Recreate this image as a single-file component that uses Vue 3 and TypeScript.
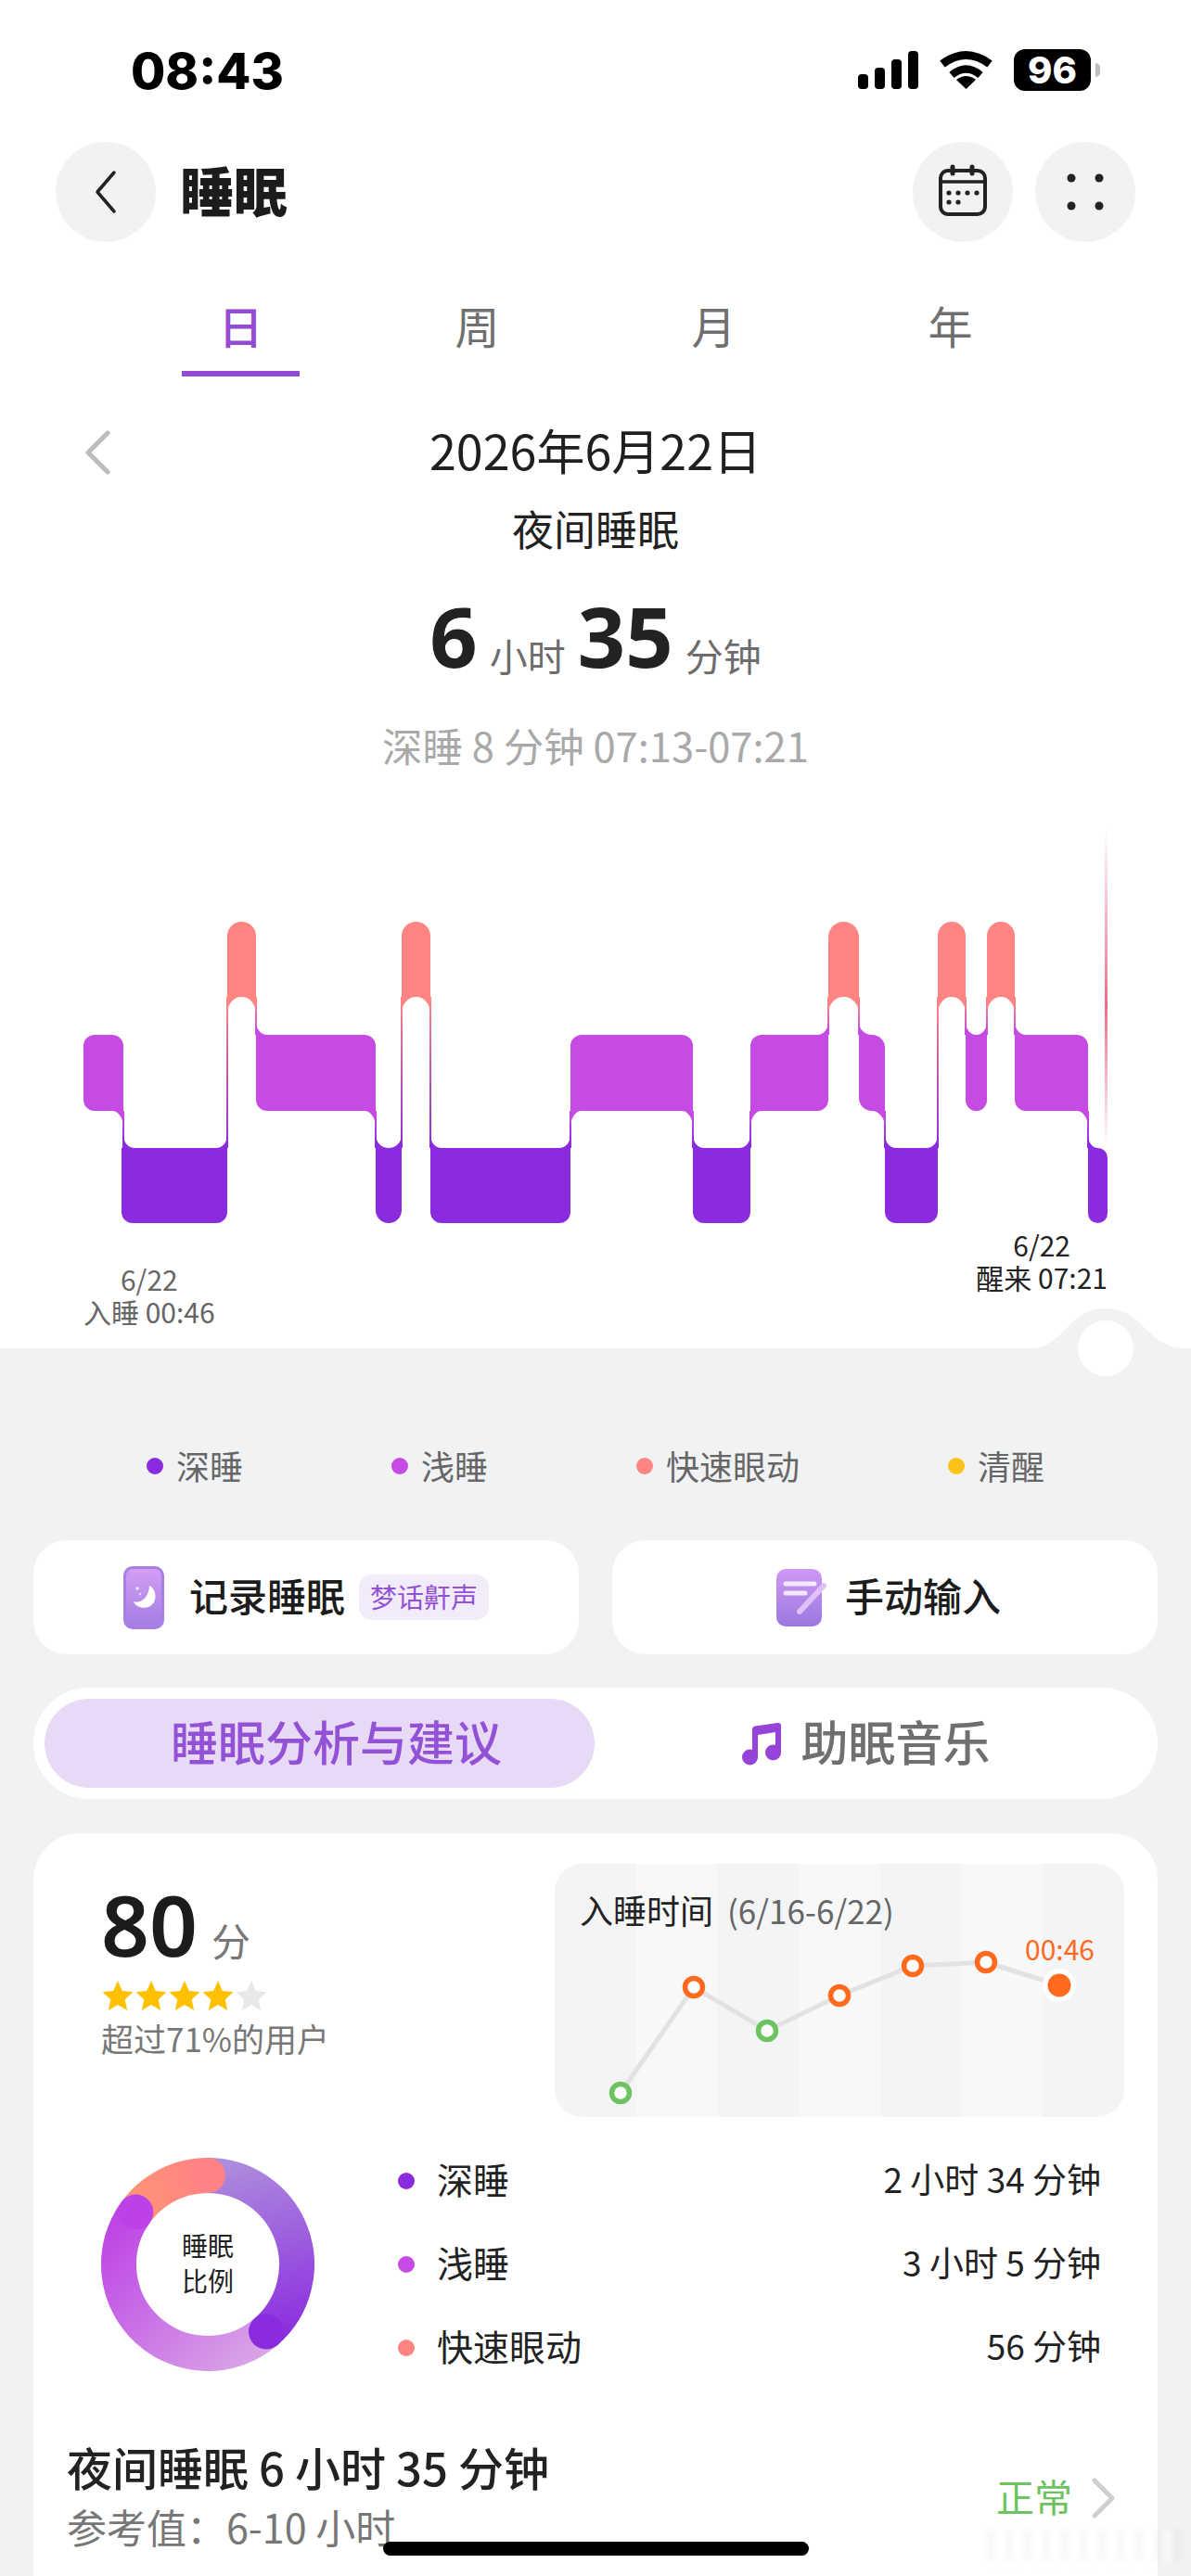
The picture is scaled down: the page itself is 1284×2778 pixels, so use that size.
<script setup lang="ts">
type Stage = 'deep' | 'light' | 'rem'

const levels: Record<Stage, { top: number; bottom: number; rank: number; color: string }> = {
  rem: { top: 994, bottom: 1075, rank: 0, color: '#ff8482' },
  light: { top: 1116, bottom: 1198, rank: 1, color: '#c64be5' },
  deep: { top: 1238, bottom: 1319, rank: 2, color: '#8b2bdf' },
}

const blocks: { stage: Stage; x0: number; x1: number }[] = [
  { stage: 'light', x0: 90, x1: 133 },
  { stage: 'deep', x0: 131, x1: 245 },
  { stage: 'rem', x0: 245, x1: 276 },
  { stage: 'light', x0: 276, x1: 405 },
  { stage: 'deep', x0: 405, x1: 433 },
  { stage: 'rem', x0: 433, x1: 464 },
  { stage: 'deep', x0: 464, x1: 615 },
  { stage: 'light', x0: 615, x1: 747 },
  { stage: 'deep', x0: 747, x1: 809 },
  { stage: 'light', x0: 809, x1: 893 },
  { stage: 'rem', x0: 893, x1: 926 },
  { stage: 'light', x0: 926, x1: 954 },
  { stage: 'deep', x0: 954, x1: 1011 },
  { stage: 'rem', x0: 1011, x1: 1041 },
  { stage: 'light', x0: 1041, x1: 1064 },
  { stage: 'rem', x0: 1064, x1: 1094 },
  { stage: 'light', x0: 1094, x1: 1173 },
  { stage: 'deep', x0: 1173, x1: 1194 },
]

const FILLET_UP = 18
const FILLET_LOW = 14

function radius(i: number) {
  const w = blocks[i].x1 - blocks[i].x0
  return w < 40 ? w / 2 : 12
}

// 每段的圆角取决于左右相邻段的高低
const segments = blocks.map((b, i) => {
  const { top, bottom, rank, color } = levels[b.stage]
  const prev = blocks[i - 1] ? levels[blocks[i - 1].stage].rank : null
  const next = blocks[i + 1] ? levels[blocks[i + 1].stage].rank : null
  const r = radius(i)
  const tl = prev === null || prev > rank ? r : 0
  const bl = prev === null || prev < rank ? r : 0
  const tr = next === null || next > rank ? r : 0
  const br = next === null || next < rank ? r : 0
  const d = `M${b.x0 + tl} ${top}H${b.x1 - tr}A${tr} ${tr} 0 0 1 ${b.x1} ${top + tr}V${bottom - br}` +
    `A${br} ${br} 0 0 1 ${b.x1 - br} ${bottom}H${b.x0 + bl}A${bl} ${bl} 0 0 1 ${b.x0} ${bottom - bl}` +
    `V${top + tl}A${tl} ${tl} 0 0 1 ${b.x0 + tl} ${top}Z`
  return { d, color }
})

const gradients = [
  { id: 'rem-light', from: levels.rem, to: levels.light },
  { id: 'rem-deep', from: levels.rem, to: levels.deep },
  { id: 'light-deep', from: levels.light, to: levels.deep },
]

// 相邻两段之间的细连接线和内凹过渡
const links = blocks.slice(1).map((b, n) => {
  const a = blocks[n]
  const aIsUpper = levels[a.stage].rank < levels[b.stage].rank
  const upper = aIsUpper ? a : b
  const lower = aIsUpper ? b : a
  const ru = radius(aIsUpper ? n : n + 1)
  const rl = radius(aIsUpper ? n + 1 : n)
  const x = a.x1
  const uDir = aIsUpper ? -1 : 1
  const lDir = -uDir
  const yu = levels[upper.stage].bottom
  const yl = levels[lower.stage].top
  return {
    x,
    y: yu,
    h: yl - yu,
    fill: `url(#${upper.stage}-${lower.stage})`,
    upperColor: levels[upper.stage].color,
    lowerColor: levels[lower.stage].color,
    upperFillet: `M${x} ${yu}H${x + uDir * ru}A${ru} ${FILLET_UP} 0 0 ${uDir > 0 ? 0 : 1} ${x} ${yu + FILLET_UP}Z`,
    lowerFillet: `M${x} ${yl}H${x + lDir * rl}A${rl} ${FILLET_LOW} 0 0 ${lDir > 0 ? 1 : 0} ${x} ${yl - FILLET_LOW}Z`,
  }
})

const tabs = ['日', '周', '月', '年']

const legend = [
  { label: '深睡', color: '#8b2bdf' },
  { label: '浅睡', color: '#c64be5' },
  { label: '快速眼动', color: '#ff8482' },
  { label: '清醒', color: '#fbc218' },
]

const calendarDots = [[15, 31], [25, 31], [35, 31], [45, 31], [15, 41], [25, 41]]
const gridDots = [[15, 15], [45, 15], [15, 45], [45, 45]]

const stars = [true, true, true, true, false]

const trend = [
  { x: 71, y: 247, color: '#6cc35f' },
  { x: 150, y: 133, color: '#ff6a1f' },
  { x: 229, y: 180, color: '#6cc35f' },
  { x: 307, y: 142, color: '#ff6a1f' },
  { x: 386, y: 110, color: '#ff6a1f' },
  { x: 465, y: 106, color: '#ff6a1f' },
]
const trendLine = [...trend, { x: 544, y: 131, color: '' }].map(p => `${p.x},${p.y}`).join(' ')

const ratios = [
  { label: '深睡', value: '2 小时 34 分钟', color: '#8b2bdf' },
  { label: '浅睡', value: '3 小时 5 分钟', color: '#c64be5' },
  { label: '快速眼动', value: '56 分钟', color: '#ff8482' },
]

function point(deg: number) {
  const a = (deg * Math.PI) / 180
  return { x: 115 + 96 * Math.sin(a), y: 115 - 96 * Math.cos(a) }
}

function arc(from: number, to: number) {
  const s = point(from)
  const e = point(to)
  const large = to - from > 180 ? 1 : 0
  return `M${s.x} ${s.y}A96 96 0 ${large} 1 ${e.x} ${e.y}`
}

const deepEnd = point(139)
const lightEnd = point(306)
const remEnd = point(360)
</script>

<template>
  <div class="page">
    <section class="hero">
      <div class="status">
        <span class="time">08:43</span>
        <div class="status-icons">
          <svg width="65" height="41" viewBox="0 0 65 41">
            <rect x="0" y="25" width="11" height="16" rx="4" />
            <rect x="18" y="18" width="11" height="23" rx="4" />
            <rect x="36" y="9" width="11" height="32" rx="4" />
            <rect x="54" y="0" width="11" height="41" rx="4" />
          </svg>
          <svg width="57" height="42" viewBox="0 0 57 42">
            <path d="M3 15Q28.5 -4 54 15" fill="none" stroke="#000" stroke-width="9" />
            <path d="M13 27Q28.5 14 44 27" fill="none" stroke="#000" stroke-width="8" />
            <path d="M28.5 42L18 32Q28.5 24 39 32Z" />
          </svg>
          <div class="battery">
            <span class="battery-body">96</span>
            <span class="battery-nub"></span>
          </div>
        </div>
      </div>

      <header class="nav">
        <button class="round-btn">
          <svg width="30" height="48" viewBox="0 0 30 48">
            <polyline points="24,3 6,24 24,45" fill="none" stroke="#222" stroke-width="3.5" stroke-linecap="round" stroke-linejoin="round" />
          </svg>
        </button>
        <h1 class="nav-title">睡眠</h1>
        <button class="round-btn nav-cal">
          <svg width="60" height="60" viewBox="0 0 60 60">
            <rect x="6" y="7" width="48" height="47" rx="8" fill="none" stroke="#222" stroke-width="4" />
            <line x1="6" y1="19" x2="54" y2="19" stroke="#222" stroke-width="3.5" />
            <line x1="19" y1="3" x2="19" y2="10" stroke="#222" stroke-width="5" stroke-linecap="round" />
            <line x1="40" y1="3" x2="40" y2="10" stroke="#222" stroke-width="5" stroke-linecap="round" />
            <circle v-for="(p, i) in calendarDots" :key="i" :cx="p[0]" :cy="p[1]" r="2.6" fill="#222" />
          </svg>
        </button>
        <button class="round-btn">
          <svg width="60" height="60" viewBox="0 0 60 60">
            <circle v-for="(p, i) in gridDots" :key="i" :cx="p[0]" :cy="p[1]" r="4.5" fill="#222" />
          </svg>
        </button>
      </header>

      <nav class="tabs">
        <div v-for="(t, i) in tabs" :key="t" class="tab" :class="{ active: i === 0 }">
          <span class="tab-text">{{ t }}</span>
          <span class="tab-line"></span>
        </div>
      </nav>

      <div class="date-row">
        <svg width="30" height="48" viewBox="0 0 30 48">
          <polyline points="26,3 5,24 26,45" fill="none" stroke="#bdbdbd" stroke-width="5" stroke-linecap="round" stroke-linejoin="round" />
        </svg>
        <span class="date">2026年6月22日</span>
      </div>
      <div class="night">夜间睡眠</div>
      <div class="duration">
        <b>6</b><span>小时</span><b>35</b><span>分钟</span>
      </div>
      <div class="deep-note">深睡 8 分钟 07:13-07:21</div>

      <svg class="stages" width="1284" height="445" viewBox="0 880 1284 445">
        <defs>
          <linearGradient
            v-for="g in gradients"
            :id="g.id"
            :key="g.id"
            gradientUnits="userSpaceOnUse"
            x1="0"
            x2="0"
            :y1="g.from.bottom"
            :y2="g.to.top"
          >
            <stop offset="0" :stop-color="g.from.color" />
            <stop offset="1" :stop-color="g.to.color" />
          </linearGradient>
          <linearGradient id="wake" gradientUnits="userSpaceOnUse" x1="0" x2="0" y1="895" y2="1238">
            <stop offset="0" stop-color="#ef6b87" stop-opacity="0" />
            <stop offset="0.55" stop-color="#ef6b87" />
            <stop offset="1" stop-color="#ef6b87" stop-opacity="0" />
          </linearGradient>
        </defs>
        <rect x="1191" y="895" width="3" height="343" fill="url(#wake)" />
        <g v-for="(l, i) in links" :key="i">
          <rect :x="l.x - 1" :y="l.y" width="2" :height="l.h" :fill="l.fill" />
          <path :d="l.upperFillet" :fill="l.upperColor" />
          <path :d="l.lowerFillet" :fill="l.lowerColor" />
        </g>
        <path v-for="(s, i) in segments" :key="i" :d="s.d" :fill="s.color" />
      </svg>

      <div class="stage-labels">
        <div class="stage-label start">
          <div>6/22</div>
          <div>入睡 00:46</div>
        </div>
        <div class="stage-label end">
          <div>6/22</div>
          <div>醒来 07:21</div>
        </div>
      </div>

      <svg class="knob" width="184" height="80" viewBox="0 0 184 80">
        <path d="M0 49H10C48 49 50 6 92 6C134 6 136 49 177 49H184V80H0Z" fill="#f1f2f4" />
        <circle cx="92" cy="49" r="30" fill="#fff" />
      </svg>
    </section>

    <div class="legend">
      <div v-for="l in legend" :key="l.label" class="legend-item">
        <i class="dot" :style="{ background: l.color }"></i>
        <span>{{ l.label }}</span>
      </div>
    </div>

    <div class="actions">
      <div class="action">
        <svg width="44" height="68" viewBox="0 0 44 68">
          <defs>
            <linearGradient id="phone" x1="0" x2="0" y1="0" y2="1">
              <stop offset="0" stop-color="#d39ef3" />
              <stop offset="1" stop-color="#a47fe3" />
            </linearGradient>
          </defs>
          <rect width="44" height="68" rx="10" fill="#a67ee6" />
          <rect x="3" y="3" width="38" height="59" rx="7" fill="url(#phone)" />
          <path d="M28 21C36 25 37 38 29 43C22 47 13 44 11 38C19 41 28 33 28 21Z" fill="#fff" />
          <circle cx="15" cy="24" r="1.8" fill="#fff" opacity="0.8" />
          <circle cx="18" cy="30" r="1.2" fill="#fff" opacity="0.7" />
        </svg>
        <span class="action-text">记录睡眠</span>
        <span class="action-tag">梦话鼾声</span>
      </div>
      <div class="action manual">
        <svg width="54" height="64" viewBox="0 0 54 64">
          <defs>
            <linearGradient id="note" x1="0" x2="0" y1="0" y2="1">
              <stop offset="0" stop-color="#d098f5" />
              <stop offset="1" stop-color="#9a78e0" />
            </linearGradient>
          </defs>
          <rect x="0" y="1" width="49" height="62" rx="10" fill="url(#note)" />
          <line x1="10" y1="17" x2="41" y2="17" stroke="#f3e9fc" stroke-width="5" stroke-linecap="round" />
          <line x1="10" y1="27" x2="31" y2="27" stroke="#f3e9fc" stroke-width="5" stroke-linecap="round" />
          <line x1="25" y1="47" x2="51" y2="19" stroke="#dfc0f8" stroke-width="6" stroke-linecap="round" />
        </svg>
        <span class="action-text">手动输入</span>
      </div>
    </div>

    <div class="switcher">
      <div class="switch-item active"><span>睡眠分析与建议</span></div>
      <div class="switch-item music">
        <svg width="46" height="50" viewBox="0 0 46 50">
          <path d="M12 10Q12 7 15 6.5L39 3Q43 2.5 43 6V35H37V13L18 16V40H12Z" fill="#9644d8" />
          <circle cx="9.5" cy="40" r="8.5" fill="#9644d8" />
          <circle cx="34.5" cy="35" r="8.5" fill="#9644d8" />
        </svg>
        <span>助眠音乐</span>
      </div>
    </div>

    <section class="card">
      <div class="card-top">
        <div class="score">
          <div class="score-num"><b>80</b><span>分</span></div>
          <div class="stars">
            <svg v-for="(on, i) in stars" :key="i" width="36" height="34" viewBox="0 0 36 34">
              <polygon
                points="18,1 22.8,12 34.5,13.2 25.7,21.2 28.2,33 18,27 7.8,33 10.3,21.2 1.5,13.2 13.2,12"
                :fill="on ? '#ffc000' : '#e8e8e8'"
              />
            </svg>
          </div>
          <div class="score-note">超过71%的用户</div>
        </div>
        <div class="trend">
          <svg class="trend-plot" width="614" height="273" viewBox="0 0 614 273">
            <polyline :points="trendLine" fill="none" stroke="#e2e2e2" stroke-width="5" />
            <circle v-for="(p, i) in trend" :key="i" :cx="p.x" :cy="p.y" r="9.5" fill="#fff" :stroke="p.color" stroke-width="5.5" />
            <circle cx="544" cy="131" r="18" fill="#fff" />
            <circle cx="544" cy="131" r="12.5" fill="#ff6a1f" />
          </svg>
          <div class="trend-title">入睡时间<span>(6/16-6/22)</span></div>
          <span class="trend-value">00:46</span>
        </div>
      </div>

      <div class="ratio">
        <div class="donut">
          <svg width="230" height="230" viewBox="0 0 230 230">
            <defs>
              <linearGradient id="d-deep" gradientUnits="userSpaceOnUse" x1="120" y1="0" x2="170" y2="205">
                <stop offset="0" stop-color="#ae90dd" />
                <stop offset="1" stop-color="#8b2bdf" />
              </linearGradient>
              <linearGradient id="d-light" gradientUnits="userSpaceOnUse" x1="175" y1="205" x2="25" y2="50">
                <stop offset="0" stop-color="#d8a3e6" />
                <stop offset="1" stop-color="#bd42e6" />
              </linearGradient>
              <linearGradient id="d-rem" gradientUnits="userSpaceOnUse" x1="30" y1="50" x2="115" y2="20">
                <stop offset="0" stop-color="#ff9477" />
                <stop offset="1" stop-color="#ff8384" />
              </linearGradient>
            </defs>
            <g fill="none" stroke-width="38">
              <path :d="arc(0, 139)" stroke="url(#d-deep)" />
              <path :d="arc(300, 360)" stroke="url(#d-rem)" />
            </g>
            <circle :cx="remEnd.x" :cy="remEnd.y" r="19" fill="#ff8384" />
            <path :d="arc(139, 306)" fill="none" stroke="url(#d-light)" stroke-width="38" />
            <circle :cx="lightEnd.x" :cy="lightEnd.y" r="19" fill="#bd42e6" />
            <circle :cx="deepEnd.x" :cy="deepEnd.y" r="19" fill="#8b2bdf" />
          </svg>
          <div class="donut-text">睡眠<br />比例</div>
        </div>
        <div class="ratio-list">
          <div v-for="r in ratios" :key="r.label" class="ratio-row">
            <i class="dot" :style="{ background: r.color }"></i>
            <span class="ratio-label">{{ r.label }}</span>
            <span class="ratio-value">{{ r.value }}</span>
          </div>
        </div>
      </div>

      <div class="summary">
        <div>
          <div class="summary-title">夜间睡眠 6 小时 35 分钟</div>
          <div class="summary-ref">参考值：6-10 小时</div>
        </div>
        <div class="summary-state">
          <span>正常</span>
          <svg width="26" height="44" viewBox="0 0 26 44">
            <polyline points="3,3 22,22 3,41" fill="none" stroke="#cfcfcf" stroke-width="5" stroke-linecap="round" stroke-linejoin="round" />
          </svg>
        </div>
      </div>
    </section>

    <div class="mark"></div>
    <div class="home-bar"></div>
  </div>
</template>

<style scoped>
.page {
  position: relative;
  width: 1284px;
  height: 2778px;
  overflow: hidden;
  background: #f1f2f4;
  color: #222;
  font-family: "Noto Sans CJK SC", "Noto Sans", sans-serif;
}

.hero {
  position: relative;
  height: 1454px;
  background: #fff;
}

.status {
  display: flex;
  justify-content: space-between;
  height: 153px;
  padding: 50px 98px 0 141px;
  box-sizing: border-box;
}
.time {
  font-family: Inter, sans-serif;
  font-size: 54px;
  font-weight: 800;
  line-height: 54px;
  color: #000;
}
.status-icons {
  display: flex;
  align-items: center;
  gap: 23px;
  height: 50px;
}
.battery {
  display: flex;
  align-items: center;
  gap: 5px;
}
.battery-body {
  width: 83px;
  height: 45px;
  border-radius: 12px;
  background: #000;
  color: #fff;
  font-family: Inter, sans-serif;
  font-size: 40px;
  font-weight: 800;
  line-height: 45px;
  text-align: center;
}
.battery-nub {
  width: 5px;
  height: 15px;
  border-radius: 0 5px 5px 0;
  background: #bdbdbd;
}

.nav {
  display: flex;
  align-items: center;
  height: 108px;
  padding: 0 60px;
}
.round-btn {
  display: flex;
  align-items: center;
  justify-content: center;
  width: 108px;
  height: 108px;
  padding: 0;
  border: none;
  border-radius: 50%;
  background: #f2f2f2;
  flex-shrink: 0;
}
.nav-title {
  flex: 1;
  margin: 0 0 6px 26px;
  font-size: 58px;
  font-weight: 900;
  line-height: 70px;
  color: #1c1c1c;
}
.nav-cal {
  margin-right: 24px;
}

.tabs {
  display: grid;
  grid-template-columns: repeat(4, 255px);
  padding: 54px 0 0 132px;
}
.tab {
  display: flex;
  flex-direction: column;
  align-items: center;
}
.tab-text {
  font-size: 48px;
  line-height: 70px;
  color: #6f6f6f;
}
.tab-line {
  width: 127px;
  height: 6px;
  margin-top: 15px;
}
.tab.active .tab-text {
  color: #934bd4;
  font-weight: 500;
}
.tab.active .tab-line {
  background: #934bd4;
}

.date-row {
  display: grid;
  grid-template-columns: 1fr auto 1fr;
  align-items: center;
  height: 60px;
  margin-top: 49px;
  padding: 0 90px;
}
.date {
  margin-bottom: 6px;
  font-size: 52px;
  line-height: 60px;
  color: #1f1f1f;
}
.night {
  margin-top: 25px;
  font-size: 45px;
  line-height: 60px;
  text-align: center;
  color: #222;
}
.duration {
  display: flex;
  align-items: baseline;
  justify-content: center;
  gap: 13px;
  height: 100px;
  margin-top: 35px;
  line-height: 100px;
}
.duration b {
  font-family: "Noto Sans", sans-serif;
  font-size: 90px;
  font-weight: 700;
  color: #222;
}
.duration span {
  font-size: 41px;
  color: #6c6c6c;
  transform: translateY(4px);
}
.deep-note {
  margin-top: 42px;
  font-size: 43.5px;
  line-height: 54px;
  text-align: center;
  color: #a9a9a9;
}

.stages {
  display: block;
  margin-top: 49px;
}

.stage-labels {
  display: flex;
  align-items: flex-end;
  justify-content: space-between;
  padding: 0 90px;
  font-size: 30px;
  line-height: 35px;
}
.stage-label.start {
  color: #666;
  text-align: center;
  margin-top: 37px;
}
.stage-label.end {
  color: #222;
  text-align: center;
  margin-bottom: 37px;
}

.knob {
  position: absolute;
  right: 0;
  top: 1405px;
}

.legend {
  display: flex;
  justify-content: center;
  gap: 160px;
  margin-top: 101px;
  margin-bottom: 55px;
  font-size: 36px;
  line-height: 50px;
  color: #666;
}
.legend-item {
  display: flex;
  align-items: center;
  gap: 14px;
}
.legend-item span {
  margin-bottom: 1px;
}
.dot {
  display: block;
  width: 18px;
  height: 18px;
  border-radius: 50%;
  flex-shrink: 0;
}

.actions {
  display: grid;
  grid-template-columns: 588px 588px;
  gap: 36px;
  margin: 0 36px;
}
.action {
  display: flex;
  align-items: center;
  justify-content: center;
  height: 123px;
  border-radius: 36px;
  background: #fff;
}
.action-text {
  margin: 0 0 6px 27px;
  font-size: 42px;
  font-weight: 500;
  color: #1c1c1c;
}
.manual {
  padding-left: 8px;
}
.manual .action-text {
  margin-left: 20px;
}
.action-tag {
  margin-left: 15px;
  padding: 0 12px;
  height: 49px;
  border-radius: 14px;
  background: #f2ebfa;
  color: #9352d6;
  font-size: 29px;
  line-height: 46px;
}

.switcher {
  display: grid;
  grid-template-columns: 593px 1fr;
  height: 120px;
  margin: 36px 36px 0;
  padding: 12px;
  box-sizing: border-box;
  border-radius: 60px;
  background: #fff;
}
.switch-item {
  display: flex;
  align-items: center;
  justify-content: center;
  gap: 18px;
  font-size: 51px;
  font-weight: 500;
  color: #6f6f6f;
}
.switch-item span {
  margin-bottom: 6px;
}
.switch-item.active {
  padding-left: 36px;
  border-radius: 48px;
  background: #e8d9f7;
  color: #9352d6;
}
.switch-item.music {
  padding-right: 10px;
}

.card {
  height: 860px;
  margin: 37px 36px 0;
  padding: 33px 36px 0;
  box-sizing: border-box;
  border-radius: 50px 50px 0 0;
  background: #fff;
}
.card-top {
  display: flex;
  justify-content: space-between;
}
.score {
  padding: 15px 0 0 37px;
}
.score-num {
  display: flex;
  align-items: baseline;
  gap: 15px;
  height: 100px;
  line-height: 100px;
}
.score-num b {
  font-family: "Noto Sans", sans-serif;
  font-size: 91px;
  font-weight: 600;
  color: #1c1c1c;
}
.score-num span {
  font-size: 42px;
  color: #777;
}
.stars {
  display: flex;
  height: 34px;
  margin-top: 10px;
}
.score-note {
  margin-top: 4px;
  font-size: 35px;
  line-height: 50px;
  color: #777;
}

.trend {
  position: relative;
  width: 614px;
  height: 273px;
  overflow: hidden;
  border-radius: 30px;
  background: repeating-linear-gradient(90deg, #f3f4f6 0 87.7px, #f8f8f9 87.7px 175.4px);
}
.trend-plot {
  position: absolute;
  left: 0;
  top: 0;
}
.trend-title {
  position: relative;
  padding: 27px 0 0 27px;
  font-size: 36px;
  line-height: 44px;
  color: #222;
}
.trend-title span {
  margin-left: 15px;
  font-size: 35px;
  color: #666;
}
.trend-value {
  position: absolute;
  right: 32px;
  top: 76px;
  font-size: 30px;
  line-height: 30px;
  color: #ff6a1f;
}

.ratio {
  display: flex;
  align-items: center;
  height: 270px;
  margin-top: 24px;
  padding: 0 25px 0 37px;
}
.donut {
  position: relative;
  width: 230px;
  height: 230px;
  flex-shrink: 0;
}
.donut svg {
  display: block;
}
.donut-text {
  position: absolute;
  left: 0;
  right: 0;
  top: 75px;
  font-size: 28px;
  line-height: 38px;
  text-align: center;
  color: #222;
}
.ratio-list {
  flex: 1;
  margin-left: 90px;
}
.ratio-row {
  display: flex;
  align-items: center;
  height: 90px;
  font-size: 37px;
  color: #222;
}
.ratio-label {
  flex: 1;
  margin: 0 0 6px 24px;
  font-size: 39px;
}
.ratio-value {
  margin-bottom: 6px;
}

.summary {
  display: flex;
  align-items: center;
  justify-content: space-between;
  margin-top: 53px;
  padding: 0 9px 0 0;
}
.summary-title {
  font-size: 49px;
  font-weight: 500;
  line-height: 60px;
  color: #222;
}
.summary-ref {
  margin-top: 4px;
  font-size: 43px;
  line-height: 60px;
  color: #777;
}
.summary-state {
  display: flex;
  align-items: center;
  gap: 21px;
  margin-top: 3px;
  font-size: 41px;
  color: #6cc35f;
}
.summary-state span {
  margin-bottom: 6px;
}

.mark {
  position: absolute;
  left: 1065px;
  top: 2728px;
  width: 206px;
  height: 34px;
  background: repeating-linear-gradient(90deg, rgba(150, 150, 150, 0.1) 0 6px, rgba(255, 255, 255, 0.5) 6px 20px);
  filter: blur(3px);
}
.home-bar {
  position: absolute;
  left: 413px;
  top: 2741px;
  width: 459px;
  height: 15px;
  border-radius: 8px;
  background: #000;
}
</style>
